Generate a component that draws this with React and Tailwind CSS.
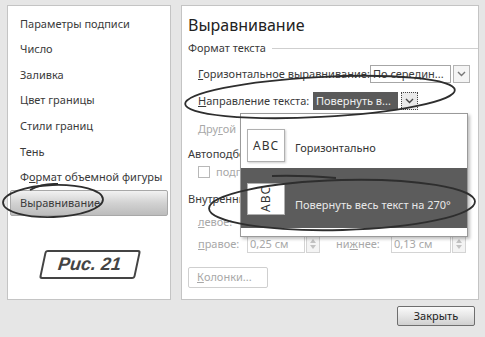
import React from 'react'

const Chevron = ({ color = '#555' }) => (
  <svg width="9" height="6" viewBox="0 0 9 6">
    <polyline points="1,1 4.5,4.5 8,1" fill="none" stroke={color} strokeWidth="1.4" />
  </svg>
)

const Spinner = () => (
  <div className='w-[14px] h-full border border-[#d4d4d4] bg-[#f4f4f4] flex flex-col items-center justify-center gap-[2px]'>
    <svg width="6" height="4" viewBox="0 0 6 4"><polygon points="0,4 3,0 6,4" fill="#c2c2c2" /></svg>
    <svg width="6" height="4" viewBox="0 0 6 4"><polygon points="0,0 3,4 6,0" fill="#c2c2c2" /></svg>
  </div>
)

const items = [
  "Параметры подписи",
  "Число",
  "Заливка",
  "Цвет границы",
  "Стили границ",
  "Тень",
]

const App = () => {
  return (
    <div className="relative w-[485px] h-[337px] bg-[#e6e6e6] overflow-hidden font-['Noto_Sans',sans-serif] text-[11px] text-[#3a3a3a]">
      <div className='flex pt-[5px] pl-[7px] gap-[10px]'>
        {/* LEFT LIST */}
        <div className='w-[164px] h-[295px] bg-white border border-[#c4c4c4] flex flex-col'>
          <div className='pt-[5px]'>
            {items.map((t) => (
              <div key={t} className='h-[25.6px] flex items-center pl-[12px]'>{t}</div>
            ))}
            <div className='h-[25.6px] flex items-center pl-[12px]'>
              Ф<span className='underline'>о</span>рмат объемной фигуры
            </div>
            <div className='h-[25.6px] flex items-center mx-[2px] pl-[9px] rounded-[2px] border border-[#a8a8a8] bg-gradient-to-b from-[#f2f2f2] via-[#d2d2d2] to-[#bcbcbc]'>
              Выравнивание
            </div>
          </div>
          <div className='mt-[34px] ml-[34px] w-[96px] h-[29px] border-2 border-[#444] rounded-[3px] -skew-x-12 flex items-center justify-center'>
            <span className="skew-x-6 font-['Liberation_Sans',sans-serif] font-bold italic text-[18px] text-[#444]">Рис. 21</span>
          </div>
        </div>

        {/* RIGHT PANEL */}
        <div className='w-[298px] h-[295px] bg-white border border-[#c4c4c4] pl-[6px] flex flex-col'>
          <div className='mt-[9px] text-[16px] leading-[20px] text-[#222]'>Выравнивание</div>
          <div className='mt-[6px] h-[14px] flex items-center gap-[6px]'>
            <span>Формат текста</span>
            <div className='flex-1 h-px bg-[#cfcfcf]'></div>
          </div>
          <div className='mt-[10px] h-[18px] flex items-center pl-[10px]'>
            <span className='w-[172px]'><span className='underline'>Г</span>оризонтальное выравнивание:</span>
            <div className='w-[81px] h-full border border-[#a6a6a6] flex items-center pl-[2px] overflow-hidden whitespace-nowrap'>По середин...</div>
            <div className='ml-[2px] w-[17px] h-full border border-[#b4b4b4] bg-[#f4f4f4] flex items-center justify-center'>
              <Chevron color='#777' />
            </div>
          </div>
          <div className='mt-[9px] h-[18px] flex items-center pl-[10px]'>
            <span className='w-[115px]'><span className='underline'>Н</span>аправление текста:</span>
            <div className='w-[85px] h-full bg-[#5a5a5a] text-[#f0f0f0] flex items-center pl-[3px] whitespace-nowrap overflow-hidden'>Повернуть в...</div>
            <div className='ml-[3px] w-[17px] h-full border border-dotted border-[#444] bg-[#eaeaea] flex items-center justify-center'>
              <Chevron color='#444' />
            </div>
          </div>
          <div className='mt-[12px] h-[14px] flex items-center pl-[10px] text-[#a8a8a8]'>Дру<span className='underline'>г</span>ой</div>
          <div className='mt-[11px] h-[14px] flex items-center'>Автоподбор</div>
          <div className='mt-[5px] h-[12px] flex items-center pl-[10px] gap-[6px] text-[#a8a8a8]'>
            <div className='w-[12px] h-[12px] border border-[#b8b8b8]'></div>
            <span>подгонять размер фигуры под текст</span>
          </div>
          <div className='mt-[14px] h-[14px] flex items-center'>Внутренние поля</div>
          <div className='mt-[8px] h-[17px] flex items-center pl-[10px] text-[#a8a8a8]'>
            <span className='w-[49px]'><span className='underline'>л</span>евое:</span>
            <div className='w-[58px] h-full border border-[#d4d4d4]'></div>
            <div className='ml-[88px] w-[60px] h-full border border-[#d4d4d4]'></div>
            <Spinner />
          </div>
          <div className='mt-[4px] h-[18px] flex items-center pl-[10px] text-[#a8a8a8]'>
            <span className='w-[49px]'><span className='underline'>п</span>равое:</span>
            <div className='w-[58px] h-full border border-[#d4d4d4] flex items-center pl-[2px]'>0,25 см</div>
            <div className='ml-[1px] h-full'><Spinner /></div>
            <span className='ml-[16px] w-[55px]'>ни<span className='underline'>ж</span>нее:</span>
            <div className='w-[60px] h-full border border-[#d4d4d4] flex items-center pl-[2px]'>0,13 см</div>
            <div className='ml-[1px] h-full'><Spinner /></div>
          </div>
          <div className='mt-[14px] w-[80px] h-[21px] border border-[#cfcfcf] rounded-[2px] flex items-center pl-[8px] text-[#a8a8a8]'>
            <span className='underline'>К</span>олонки...
          </div>
        </div>
      </div>

      <div className='flex justify-end pr-[10px] mt-[6px]'>
        <div className='w-[78px] h-[20px] border border-[#6e6e6e] rounded-[2px] bg-gradient-to-b from-[#fafafa] via-[#e6e6e6] to-[#cfcfcf] flex items-center justify-center text-[#222]'>
          Закрыть
        </div>
      </div>

      {/* DROPDOWN MENU */}
      <div className='absolute left-[240px] top-[113px] w-[228px] h-[124px] bg-white border border-[#9a9a9a] shadow-[2px_2px_3px_rgba(0,0,0,0.25)] flex flex-col'>
        <div className='h-[54px] flex items-start pt-[15px] pl-[6px]'>
          <div className='w-[38px] h-[33px] border border-[#b0b0b0] bg-white shadow-[1px_1px_2px_rgba(0,0,0,0.2)] flex items-center justify-center text-[12px] tracking-[1px] text-[#333]'>ABC</div>
          <span className='ml-[10px] mt-[11px] text-[#333]'>Горизонтально</span>
        </div>
        <div className='h-[60px] bg-[#5c5c5c] flex items-start pt-[15px] pl-[6px]'>
          <div className='w-[38px] h-[32px] border border-[#b0b0b0] bg-white flex items-center justify-center'>
            <span className='-rotate-90 text-[12px] leading-[14px] tracking-[1px] text-[#333]'>ABC</span>
          </div>
          <span className='ml-[10px] mt-[14px] text-[#e8e8e8]'>Повернуть весь текст на 270°</span>
        </div>
        <div className='flex-1 bg-white'></div>
      </div>

      {/* HAND-DRAWN MARKS */}
      <svg className='absolute inset-0 pointer-events-none' width="485" height="337" viewBox="0 0 485 337">
        <g fill="none" stroke="#2e2e2e" strokeWidth="1.8">
          <ellipse cx="320" cy="97" rx="135" ry="20" transform="rotate(-3 320 97)" />
          <ellipse cx="53" cy="201" rx="50" ry="16" transform="rotate(-2 53 201)" />
          <path d="M30 190 Q42 183 58 184" />
          <ellipse cx="342" cy="205" rx="133" ry="25" transform="rotate(-1.5 342 205)" />
          <path d="M272 176 Q300 175 336 178" />
        </g>
      </svg>
    </div>
  )
}

export default App
